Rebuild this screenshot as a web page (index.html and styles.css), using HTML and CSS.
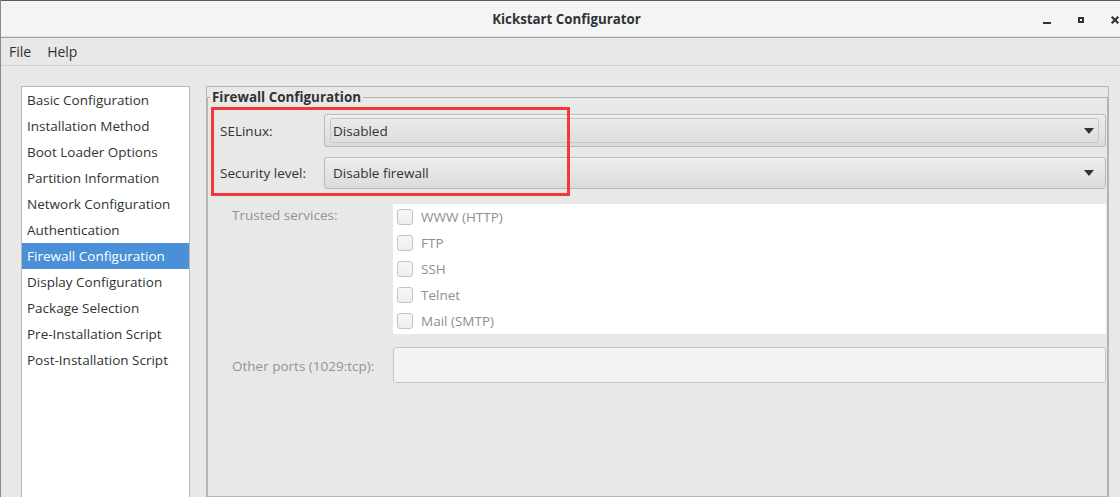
FILE: index.html
```html
<!DOCTYPE html>
<html lang="en">
<head>
    <meta charset="UTF-8">
    <title>Kickstart Configurator</title>
    <link rel="stylesheet" href="styles.css">
</head>
<body>
    <div class="window">
        <header class="titlebar">
            <span class="spacer"></span>
            <span class="title">Kickstart Configurator</span>
            <div class="controls">
                <button class="ctl" title="Minimize">
                    <svg width="16" height="16" viewBox="0 0 16 16"><rect x="4" y="11" width="8" height="2" fill="#2e3436"/></svg>
                </button>
                <button class="ctl" title="Maximize">
                    <svg width="16" height="16" viewBox="0 0 16 16"><rect x="6" y="7" width="4" height="4" fill="none" stroke="#2e3436" stroke-width="2"/></svg>
                </button>
                <button class="ctl" title="Close">
                    <svg width="16" height="16" viewBox="0 0 16 16"><path d="M4.7 5.7 L11.3 12.3 M11.3 5.7 L4.7 12.3" stroke="#2e3436" stroke-width="2.2" fill="none"/></svg>
                </button>
            </div>
        </header>

        <nav class="menubar">
            <span class="menu-item">File</span>
            <span class="menu-item">Help</span>
        </nav>

        <main class="main">
            <ul class="sidebar">
                <li>Basic Configuration</li>
                <li>Installation Method</li>
                <li>Boot Loader Options</li>
                <li>Partition Information</li>
                <li>Network Configuration</li>
                <li>Authentication</li>
                <li class="selected">Firewall Configuration</li>
                <li>Display Configuration</li>
                <li>Package Selection</li>
                <li>Pre-Installation Script</li>
                <li>Post-Installation Script</li>
            </ul>

            <section class="panel">
                <fieldset class="frame">
                    <legend>Firewall Configuration</legend>

                    <div class="top-grid">
                        <label class="field-label">SELinux:</label>
                        <div class="combo combo-nested">
                            <div class="combo-inner">
                                <span class="combo-text">Disabled</span>
                                <svg class="arrow" width="10" height="6" viewBox="0 0 10 6"><polygon points="0,0 10,0 5,6" fill="#2e3436"/></svg>
                            </div>
                        </div>

                        <label class="field-label">Security level:</label>
                        <div class="combo">
                            <span class="combo-text">Disable firewall</span>
                            <svg class="arrow" width="10" height="6" viewBox="0 0 10 6"><polygon points="0,0 10,0 5,6" fill="#2e3436"/></svg>
                        </div>
                    </div>

                    <div class="services">
                        <label class="muted-label">Trusted services:</label>
                        <ul class="service-list">
                            <li><span class="check"></span>WWW (HTTP)</li>
                            <li><span class="check"></span>FTP</li>
                            <li><span class="check"></span>SSH</li>
                            <li><span class="check"></span>Telnet</li>
                            <li><span class="check"></span>Mail (SMTP)</li>
                        </ul>

                        <label class="muted-label ports-label">Other ports (1029:tcp):</label>
                        <div class="entry"></div>
                    </div>
                </fieldset>

                <div class="annotation"></div>
            </section>
        </main>
    </div>
</body>
</html>
```

FILE: styles.css
```css
html, body {
    margin: 0;
    padding: 0;
}

body {
    width: 1120px;
    height: 497px;
    overflow: hidden;
    font-family: "Open Sans", "DejaVu Sans", sans-serif;
    font-size: 13.5px;
    color: #2e3436;
    background: #e8e8e7;
}

/* the window is a little wider than the captured area */
.window {
    display: flex;
    flex-direction: column;
    width: 1132px;
    height: 497px;
    border-left: 1px solid #8a8a8a;
    box-sizing: border-box;
    overflow: hidden;
}

/* title bar */
.titlebar {
    display: grid;
    grid-template-columns: 1fr auto 1fr;
    align-items: center;
    height: 36px;
    border-top: 1px solid #5a5a5a;
    border-bottom: 1px solid #a3a3a3;
    background: #f4f4f4;
    box-shadow: inset 0 -1px 0 #dedede;
    flex-shrink: 0;
}

.title {
    font-weight: 700;
    font-size: 13.3px;
}

.controls {
    display: flex;
    justify-self: end;
}

.ctl {
    width: 34px;
    height: 30px;
    display: flex;
    align-items: center;
    justify-content: center;
    border: none;
    background: none;
    padding: 0;
}

.ctl svg {
    display: block;
}

/* menu bar */
.menubar {
    display: flex;
    align-items: center;
    height: 27px;
    border-bottom: 1px solid #d3d3d3;
    flex-shrink: 0;
}

.menu-item {
    padding: 0 8px;
    font-size: 14px;
}

/* main area */
.main {
    flex: 1;
    display: flex;
    padding: 20px 0 0 20px;
    min-height: 0;
}

.sidebar {
    list-style: none;
    margin: 0;
    padding: 0;
    width: 169px;
    box-sizing: border-box;
    background: #fff;
    border: 1px solid #b9b9b9;
    border-bottom: none;
}

.sidebar li {
    height: 26px;
    line-height: 26px;
    padding-left: 5px;
    white-space: nowrap;
}

.sidebar li.selected {
    background: #4a90d9;
    color: #fff;
}

.panel {
    position: relative;
    flex: 1;
    margin-left: 16px;
    margin-right: 23px;
    border: 1px solid #b6b6b6;
    border-bottom: none;
}

.frame {
    margin: 0;
    padding: 7px 1px 0 12px;
    border: 1px solid #b6b6b6;
    border-right-color: #b0b0b0;
    min-width: 0;
    height: 100%;
    box-sizing: border-box;
}

.frame legend {
    font-weight: 700;
    font-size: 13.4px;
    padding: 0 2px;
    margin-left: -10px;
    line-height: 20px;
}

.top-grid {
    display: grid;
    grid-template-columns: 104px 1fr;
    row-gap: 10px;
    align-items: center;
}

.combo {
    display: flex;
    align-items: center;
    height: 32px;
    box-sizing: border-box;
    border: 1px solid #b9b9b9;
    border-radius: 3px;
    background: linear-gradient(#ececeb, #dcdcdb);
    box-shadow: inset 0 1px 0 #f6f6f6;
    padding: 0 11px 0 8px;
}

.combo-text {
    flex: 1;
}

.combo-nested {
    height: 33px;
    padding: 3px 6px 3px 5px;
}

.combo-inner {
    display: flex;
    align-items: center;
    flex: 1;
    height: 100%;
    box-sizing: border-box;
    border: 1px solid #c8c8c8;
    border-radius: 2px;
    padding: 0 4px 0 2px;
}

.arrow {
    display: block;
}

/* trusted services */
.services {
    display: grid;
    grid-template-columns: 161px 1fr;
    margin-left: 12px;
    margin-top: 15px;
}

.muted-label {
    color: #909494;
    line-height: 20px;
    padding-top: 1px;
}

.service-list {
    list-style: none;
    margin: 0;
    padding: 0 0 0 4px;
    background: #fff;
    color: #8b8f8f;
}

.service-list li {
    display: flex;
    align-items: center;
    gap: 8px;
    height: 26px;
}

.check {
    width: 16px;
    height: 16px;
    box-sizing: border-box;
    border: 1px solid #c5c5c5;
    border-radius: 3px;
    background: linear-gradient(#f6f6f6, #eeeeee);
}

.ports-label {
    align-self: center;
    margin-top: 13px;
}

.entry {
    margin-top: 13px;
    height: 36px;
    box-sizing: border-box;
    border: 1px solid #c4c4c4;
    border-radius: 3px;
    background: #f3f3f2;
}

/* screenshot annotation */
.annotation {
    position: absolute;
    left: 4px;
    top: 20px;
    width: 359px;
    height: 89px;
    box-sizing: border-box;
    border: 3px solid #f03a3a;
    pointer-events: none;
}
```
